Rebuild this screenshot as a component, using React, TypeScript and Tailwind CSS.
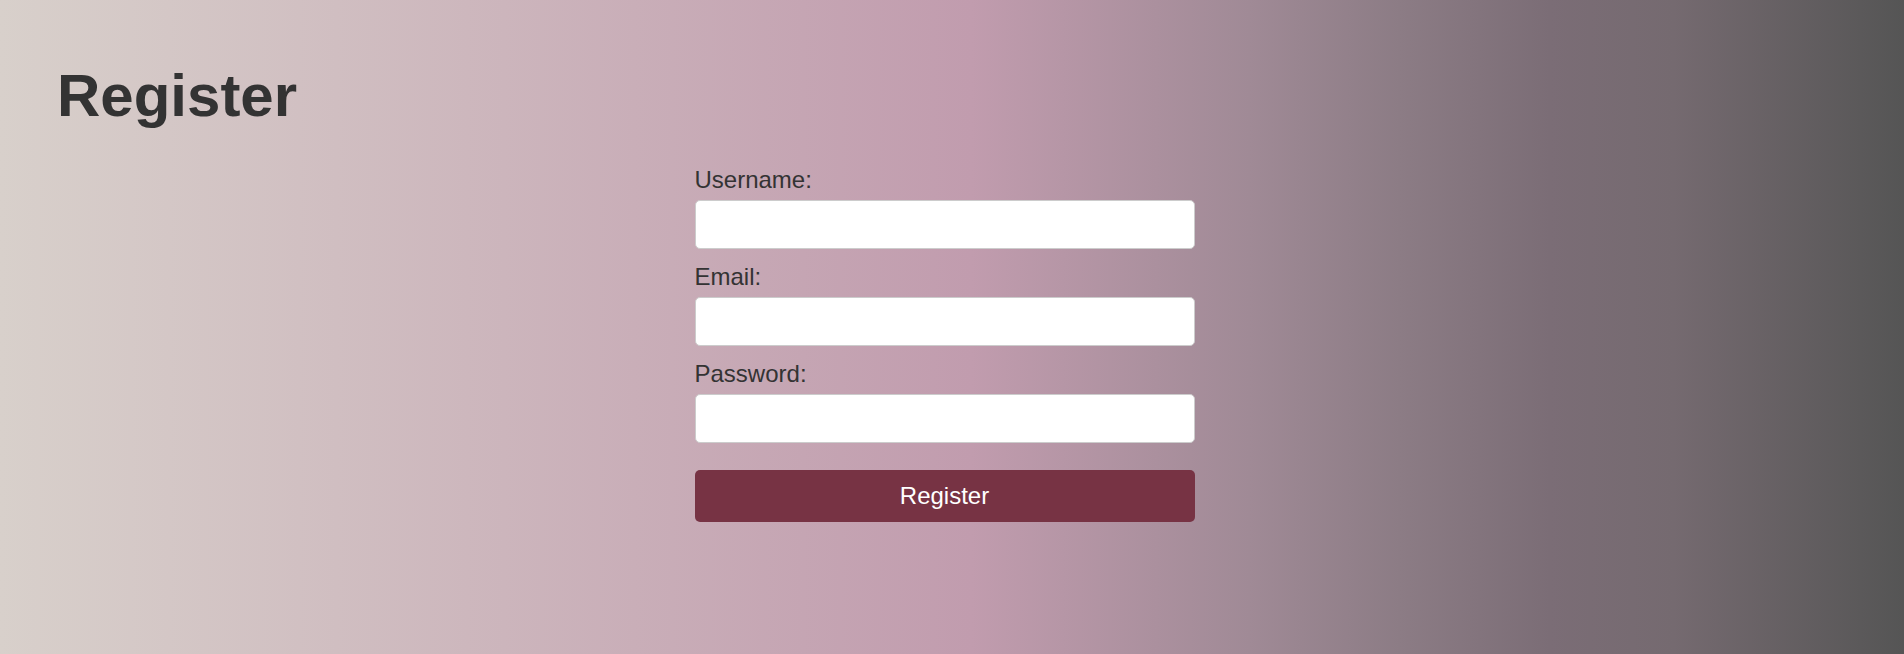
import React from "react";

const fields = [
  { id: "username", label: "Username:", type: "text" },
  { id: "email", label: "Email:", type: "email" },
  { id: "password", label: "Password:", type: "password" },
];

export default function App() {
  return (
    <div className="min-h-screen w-full bg-[linear-gradient(to_right,#d8d0cb_0%,#c19cae_51%,#a08a96_65.6%,#8c7c85_73.5%,#7b6d76_81.4%,#756a70_87.9%,#555555_100%)] font-['Liberation_Sans',Arial,sans-serif] text-[#333]">
      <h1 className="pl-[57px] pt-[61px] text-[60px] font-bold leading-[69px]">Register</h1>
      <div className="mt-[36px] flex justify-center pr-[15px]">
        <form className="flex w-[500px] flex-col" onSubmit={(e) => e.preventDefault()}>
          {fields.map((field) => (
            <div key={field.id} className="mb-[14px] flex flex-col">
              <label htmlFor={field.id} className="block text-[24px] leading-[28px]">
                {field.label}
              </label>
              <input
                id={field.id}
                type={field.type}
                className="mt-[6px] h-[49px] w-full rounded-[5px] border border-[#cccccc] bg-white px-3 text-[20px] outline-none"
              />
            </div>
          ))}
          <button
            type="submit"
            className="mt-[13px] h-[52px] w-full rounded-[5px] bg-[#773344] text-[24px] text-white"
          >
            Register
          </button>
        </form>
      </div>
    </div>
  );
}
